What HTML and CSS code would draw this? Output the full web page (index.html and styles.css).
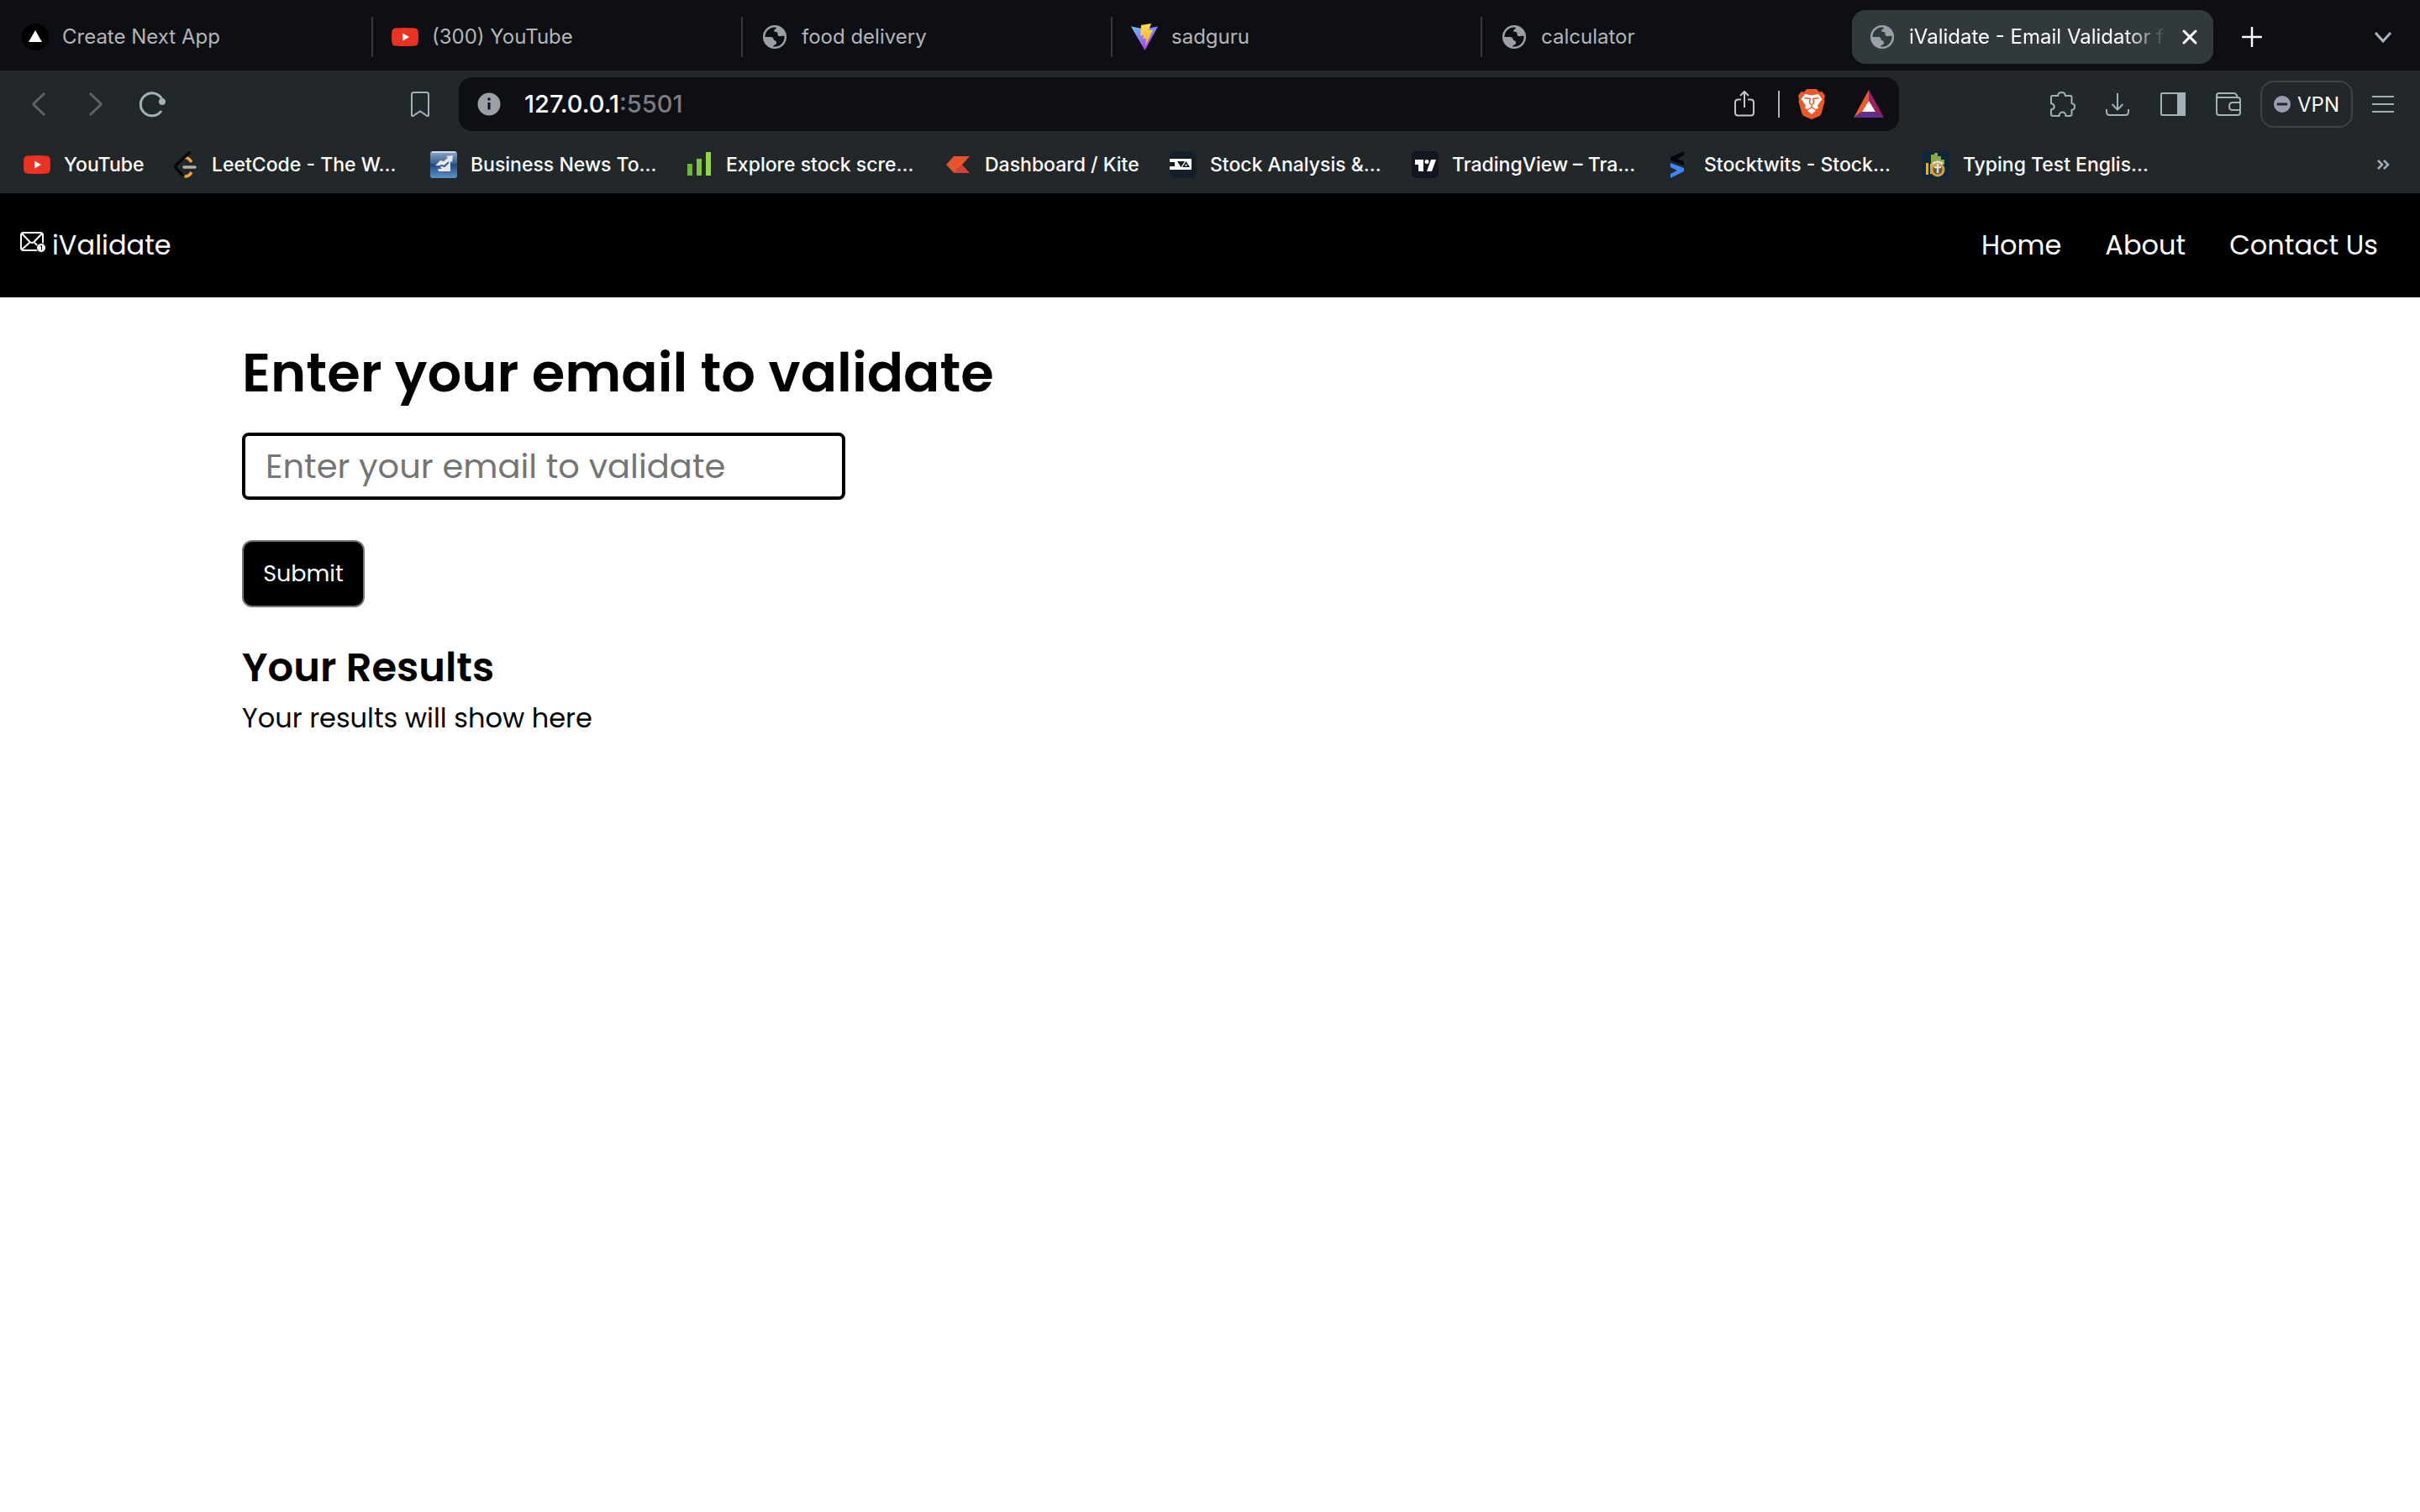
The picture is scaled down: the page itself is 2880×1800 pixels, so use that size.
FILE: index.html
```html
<!DOCTYPE html>
<html lang="en">
<head>
<meta charset="utf-8">
<title>iValidate - Email Validator</title>
<link rel="stylesheet" href="styles.css">
</head>
<body>
<svg class="sprite" aria-hidden="true">
  <symbol id="globe" viewBox="0 0 32 32"><circle cx="16" cy="16" r="12.800" fill="none" stroke="currentColor" stroke-width="2.500"/><path fill="currentColor" d="M18 3.500V7q0 2-2 2h-2.500v2q0 1.500-2 1.500H9V15h9q2 0 2 2h5q2 0 3.500-2.500C28 8 24 4 18 3.500z" opacity=".0"/><path fill="currentColor" d="M18 3C18.500 5 17.500 7 15.500 7.500c-1 2 .5 2.500 2.500 2.500 1.500 0 1.500 1.500 1.500 3 0 1.500 1.500 2.500 3.500 2 2-.500 4 0 5.500-.500C28 8.500 23.500 4 18 3zM3.500 16H11c2.500 0 3.500 1.500 4 4 2 0 3 1 3 3s-1 2-2.500 2.500c-1 .5-1.500 1.500-1.500 3C8 27.500 3.500 22 3.500 16z"/></symbol>
  <symbol id="youtube" viewBox="0 0 32 32"><path fill="#eb3223" d="M4 5.500Q16 4.500 28 5.500Q31 6 31.500 9Q32.500 16 31.500 23Q31 26 28 26.500Q16 27.500 4 26.500Q1 26 .5 23Q-.5 16 .5 9Q1 6 4 5.500z"/><path fill="#fff" d="M13 11.500v9.200l8-4.600z"/></symbol>
</svg>

<header class="browser">
  <div class="tabs">
    <div class="tab"><svg class="fav" viewBox="0 0 32 32"><circle cx="16" cy="16" r="16" fill="#000"/><path fill="#fff" d="M16 8l8 14H8z"/></svg><span>Create Next App</span></div>
    <div class="tab"><svg class="fav"><use href="#youtube"/></svg><span>(300) YouTube</span></div>
    <div class="tab"><svg class="fav"><use href="#globe"/></svg><span>food delivery</span></div>
    <div class="tab"><svg class="fav" viewBox="0 0 32 32"><defs><linearGradient id="va" x1="0" y1="0" x2=".6" y2="1"><stop offset="0" stop-color="#5cc8ff"/><stop offset="1" stop-color="#b432f5"/></linearGradient><linearGradient id="vb" x1="0" y1="0" x2="0" y2="1"><stop offset="0" stop-color="#ffe14d"/><stop offset="1" stop-color="#ffa52e"/></linearGradient></defs><path fill="url(#va)" d="M0 3.500l16 3 16-3L16.500 32z"/><path fill="url(#vb)" d="M12 2L24 0l-3 8 5-.5-9 20 1-10-3.500.8.500-4.300-4 .500z"/></svg><span>sadguru</span></div>
    <div class="tab last"><svg class="fav"><use href="#globe"/></svg><span>calculator</span></div>
    <div class="tab active"><svg class="fav"><use href="#globe"/></svg><span class="fade">iValidate - Email Validator f</span><button class="icon" aria-label="Close tab"><svg class="i24" viewBox="0 0 24 24"><path d="M5 5l14 14M19 5L5 19" stroke="#fff" stroke-width="3" stroke-linecap="round"/></svg></button></div>
    <button class="icon newtab" aria-label="New tab"><svg class="i24" viewBox="0 0 24 24"><path d="M12 1v22M1 12h22" stroke="#fff" stroke-width="2.500" stroke-linecap="round"/></svg></button>
    <button class="icon search" aria-label="Search tabs"><svg class="i24" viewBox="0 0 24 24"><path d="M3 7l9 10 9-10" fill="none" stroke="#aab4bc" stroke-width="3"/></svg></button>
  </div>

  <div class="toolbar">
    <div class="moves">
      <button class="icon dim" aria-label="Back"><svg class="i32" viewBox="0 0 32 32"><path d="M23 3L10.500 15q-1 1 0 2L23 29"/></svg></button>
      <button class="icon dim" aria-label="Forward"><svg class="i32" viewBox="0 0 32 32"><path d="M9 3l12.500 12q1 1 0 2L9 29"/></svg></button>
      <button class="icon" aria-label="Reload"><svg class="i32" viewBox="0 0 32 32"><path d="M26 24A13.500 13.500 0 1 1 26.500 9.500"/><circle cx="27" cy="13" r="4" fill="#a2b0ba" stroke="none"/></svg></button>
    </div>
    <button class="icon mark" aria-label="Bookmark this page"><svg class="i32" viewBox="0 0 32 32"><path d="M6 29V4.500q0-2.500 2.500-2.500h15q2.500 0 2.500 2.500V29q0 1.500-1.500 1L16 24.500 7.500 30Q6 30.500 6 29z"/></svg></button>
    <div class="address">
      <svg class="i32" viewBox="0 0 32 32"><circle cx="16" cy="16" r="13.500" fill="#9aa0a6" stroke="none"/><path d="M16 14v8.500" stroke="#0e0f14" stroke-width="3"/><circle cx="16" cy="10" r="1.800" fill="#0e0f14" stroke="none"/></svg>
      <span class="url">127.0.0.1<span class="port">:5501</span></span>
      <button class="icon share" aria-label="Share"><svg class="i32" viewBox="0 0 32 32"><path stroke="#c4c5c7" d="M12 10.500H8.500Q5 10.500 5 14v12q0 3.500 3.500 3.500h15Q27 29.500 27 26V14q0-3.500-3.500-3.500H20M16 20V1M11 6l5-5 5 5"/></svg></button>
      <span class="rule"></span>
      <button class="icon lion" aria-label="Shields"><svg class="i36" viewBox="0 0 36 36"><path fill="#eb5a28" d="M12 0h12l3 3.500 3.500-.500 3.500 5-1 4 .5 3-4 14.500q-1 2-3 3L18 36l-8.500-3.500q-2-1-3-3L2.500 15 3 12 2 8l3.500-5 3.500.500z"/><path fill="#fff" d="M10 6l8 1.500L26 6l4.500 6L25 19.500l1 3.500-3.500 1L18 20.500 13.500 24 10 23l1-3.500L5.500 12zM18 22.500l5 3-5 4.500-5-4.500z"/><path d="M9.500 10.500l6.500 1-.5 5 2.500 2.500 2.500-2.500-.5-5 6.500-1M18 18v3" fill="none" stroke="#eb5a28" stroke-width="1.500"/></svg></button>
      <button class="icon bat" aria-label="Rewards"><svg class="i36" viewBox="0 0 36 36"><path fill="#f1592a" d="M18 1v13l-8 13L0 34z"/><path fill="#9e1f63" d="M18 1l18 33-10-7-8-13z"/><path fill="#662d91" d="M0 34h36l-10-7H10z"/><path fill="#fff" d="M18 14l8 13H10z"/></svg></button>
    </div>
    <div class="tools">
      <button class="icon" aria-label="Extensions"><svg class="i32" viewBox="0 0 32 32"><path d="M4 6h7C11.500 .5 19.500 .5 20 6h6q1.500 0 1.500 1.500V15c5 1 5 7 0 8v5q0 2-2 2h-5c0-6-8-6-8 0H5q-2 0-2-2v-5.500c5-1 5-6 0-7.500V7.500Q3 6 4 6z"/></svg></button>
      <button class="icon" aria-label="Downloads"><svg class="i32" viewBox="0 0 32 32"><path d="M16 3v19M9.500 16l6.500 6.500 6.500-6.500M3 22v3q0 4 4 4h18q4 0 4-4v-3"/></svg></button>
      <button class="icon" aria-label="Sidebar"><svg class="i32" viewBox="0 0 32 32"><rect x="2" y="3" width="28" height="26" rx="1"/><path fill="#a2b0ba" d="M22 3h8v26h-8z"/></svg></button>
      <button class="icon" aria-label="Wallet"><svg class="i32" viewBox="0 0 32 32"><path d="M2 6v20q0 3 3 3h22q3 0 3-3V11q0-3-3-3H4.500Q2 8 2 5.500T4.500 3H22q4 0 4.500 5M30 14h-9q-4 0-4 4.500t4 4.500h9"/></svg></button>
      <button class="vpn"><svg class="i20" viewBox="0 0 20 20"><circle cx="10" cy="10" r="10" fill="#9a9db1"/><path d="M5 10h10" stroke="#22272b" stroke-width="3" stroke-linecap="round"/></svg>VPN</button>
      <button class="icon" aria-label="Menu"><svg class="i32" viewBox="0 0 32 32"><path d="M3 7h26M3 16h26M3 25h26"/></svg></button>
    </div>
  </div>

  <nav class="bookmarks" aria-label="Bookmarks">
    <a class="w176" href="#"><svg class="fav"><use href="#youtube"/></svg><span>YouTube</span></a>
    <a class="w308" href="#"><svg class="fav" viewBox="0 0 32 32"><path d="M15 8q4-2 9 5M13 28q6 5 11-3" fill="none" stroke="#f0a33a" stroke-width="3.500"/><path d="M21 2L6 16q-2 2.500 0 5l8 8" fill="none" stroke="#070706" stroke-width="3.500" stroke-linecap="round"/><path d="M15 19h13" stroke="#b3b1b0" stroke-width="3.500" stroke-linecap="round"/></svg><span>LeetCode - The W…</span></a>
    <a class="w304" href="#"><svg class="fav" viewBox="0 0 32 32"><defs><linearGradient id="bn" x1="0" y1="0" x2="0" y2="1"><stop offset="0" stop-color="#93a9c9"/><stop offset=".45" stop-color="#3a6093"/><stop offset=".5" stop-color="#1f4a80"/><stop offset="1" stop-color="#5f94c8"/></linearGradient></defs><rect width="32" height="32" rx="3" fill="url(#bn)"/><path d="M2 1h28" stroke="#c8dcea" stroke-width="2"/><path fill="#e8e8ec" d="M6 17l6-6 4 1 5-4-2-2 8-1-1 8-2-1v12H10l-1-3h5l-4-4z"/><path d="M7 19l7-2 3 1 5-5" fill="none" stroke="#3a5f92" stroke-width="2"/></svg><span>Business News To…</span></a>
    <a class="w308" href="#"><svg class="fav" viewBox="0 0 32 32"><path fill="#6fb536" d="M2 15h6v14H2z"/><path fill="#7dc63d" d="M13 9h6v20h-6z"/><path fill="#8fd840" d="M24 1h6v28h-6z"/></svg><span>Explore stock scre…</span></a>
    <a class="w268" href="#"><svg class="fav" viewBox="0 0 32 32"><path fill="#e6532e" d="M11 6h19l-9 10-9 9.500h-1L2 16z"/><path fill="#cf4436" d="M21 16l9 10H11z"/></svg><span>Dashboard / Kite</span></a>
    <a class="w288" href="#"><svg class="fav" viewBox="0 0 32 32"><rect width="32" height="32" rx="6" fill="#151d28"/><path fill="#fff" d="M0 9h25q1 0 1 1v11q0 1-1 1H0v-4h6v-3H0z"/><path fill="#151d28" d="M0 13h6v2H0zM9 12h9l-4.500 7z"/><path fill="#151d28" fill-rule="evenodd" d="M19.500 12l4.500 7h-9zM19.500 15l-1.500 2.500h3z"/></svg><span>Stock Analysis &amp;…</span></a>
    <a class="w300" href="#"><svg class="fav" viewBox="0 0 32 32"><rect width="32" height="32" rx="5" fill="#131520"/><path fill="#fff" d="M4 10h10v14H8v-8H4zM23 10h6l-5 14h-6z"/><circle cx="18" cy="12.500" r="2.500" fill="#fff"/></svg><span>TradingView – Tra…</span></a>
    <a class="w308" href="#"><svg class="fav" viewBox="0 0 32 32"><path fill="#060710" d="M24 0v5l-8 4 8 3v5L8 11V7z"/><path fill="#3f87f5" d="M8 14l16 6v4L8 32v-5l8-4-8-4z"/></svg><span>Stocktwits - Stock…</span></a>
    <a href="#"><svg class="fav" viewBox="0 0 32 32"><rect width="32" height="32" fill="#10263a"/><path fill="#87a842" d="M10 14V4h4V2h4v4h4v4h4v6H10z"/><path fill="#e0ac34" d="M4 14h3v14H4zM9 15h3v12H9z"/><circle cx="18" cy="22" r="7" fill="#5d5a3c" stroke="#d4a235" stroke-width="3"/><path d="M12 15q6-5 12 0M18 15v11M14 19h8" fill="none" stroke="#dedede" stroke-width="2.500"/></svg><span>Typing Test Englis…</span></a>
    <button class="icon more" aria-label="More bookmarks"><svg class="i24" viewBox="0 0 24 24"><path d="M6 7l5 5-5 5M13 7l5 5-5 5" fill="none" stroke="#a2b0ba" stroke-width="2.500"/></svg></button>
  </nav>
</header>

<nav class="site">
  <a class="logo" href="#"><svg class="mail" viewBox="0 0 32 32"><rect x="1" y="1" width="26" height="21" rx="3"/><path d="M2 2l9.500 10q2.500 2 5 0L26 2M2 21l9-8M26 21l-9-8"/><circle cx="25" cy="19" r="5.500" fill="#fff" stroke="#000" stroke-width="1"/><path d="M24 17.500l1.500-1v5" stroke="#000" stroke-width="1"/></svg>iValidate</a>
  <div class="links"><a href="#">Home</a><a href="#">About</a><a href="#">Contact Us</a></div>
</nav>

<main>
  <h1><label for="email">Enter your email to validate</label></h1>
  <form>
    <input id="email" type="text" placeholder="Enter your email to validate">
    <button class="submit" type="button">Submit</button>
  </form>
  <h2>Your Results</h2>
  <p>Your results will show here</p>
</main>
</body>
</html>
```
FILE: styles.css
```css
* { box-sizing: border-box; }
body { margin: 0; background: #fff; color: #000; font-family: Poppins, Inter, sans-serif; }
a { color: inherit; text-decoration: none; }
button { font-family: inherit; }
svg { display: block; flex: none; }
.sprite { position: absolute; width: 0; height: 0; }
.fav { width: 32px; height: 32px; color: #9aa0a6; }
.i20 { width: 20px; height: 20px; }
.i24 { width: 24px; height: 24px; }
.i32 { width: 32px; height: 32px; fill: none; stroke: #a2b0ba; stroke-width: 2; }
.i36 { width: 36px; height: 36px; }
.icon { display: block; flex: none; padding: 0; border: 0; background: none; }

.browser { background: #22272a; font-family: Inter, sans-serif; font-size: 24px; line-height: 32px; white-space: nowrap; }
.tabs { display: flex; align-items: center; height: 84px; padding: 4px 22px 0 4px; background: #0e0f14; color: #b4b5b7; }
.tab { display: flex; align-items: center; flex: 0 1 440px; gap: 16px; height: 48px; padding: 0 22px; border-right: 2px solid #37383c; min-width: 0; }
.tab.last { border-color: transparent; }
.tab.active { flex-basis: 430px; height: 64px; padding: 0 16px 0 20px; border: 0; border-radius: 16px; background: #32393d; color: #fff; }
.fade { flex: 1; mask-image: linear-gradient(to right, #000 84%, transparent); }
.newtab { margin-left: 34px; }
.search { margin-left: auto; margin-right: 10px; }

.toolbar { display: flex; align-items: center; height: 80px; padding: 0 28px 0 30px; }
.moves { display: flex; gap: 36px; width: 454px; }
.dim .i32 { stroke: #5b646b; }
.moves .i32 { stroke-width: 3; }
.mark { margin-right: 30px; }
.address { display: flex; align-items: center; flex: 1; height: 64px; padding: 0 18px 0 20px; border-radius: 16px; background: #0e0f14; color: #fff; }
.url { margin-left: 26px; font-size: 29px; font-weight: 500; }
.port { color: #7c7d81; }
.share { margin-left: auto; }
.rule { width: 2px; height: 32px; margin: 0 20px 0 24px; background: #b0b1b3; }
.bat { margin-left: 32px; }
.tools { display: flex; align-items: center; gap: 34px; margin-left: 178px; }
.vpn { display: flex; align-items: center; gap: 8px; width: 110px; height: 56px; margin: 0 -14px 0 -12px; padding: 0 14px; border: 2px solid #3b444a; border-radius: 16px; background: none; color: #fff; font-size: 24px; }

.bookmarks { display: flex; align-items: center; height: 66px; padding: 0 32px 2px 28px; color: #fff; font-size: 23px; font-weight: 500; }
.bookmarks a { display: flex; align-items: center; flex: 0 1 auto; gap: 16px; min-width: 0; }
.w176 { width: 176px; }
.w268 { width: 268px; }
.w288 { width: 288px; }
.w300 { width: 300px; }
.w304 { width: 304px; }
.w308 { width: 308px; }
.more { margin-left: auto; }

.site { display: flex; align-items: center; justify-content: space-between; height: 124px; padding: 0 50px 0 24px; background: #000; color: #fff; font-size: 32px; }
.logo { display: flex; align-items: center; gap: 6px; }
.mail { width: 32px; height: 32px; fill: none; stroke: #fff; stroke-width: 2; }
.links { display: flex; gap: 52px; }

main { padding: 49px 10%; }
h1 { margin: 0; font-size: 64px; line-height: 82px; font-weight: 600; }
form { display: flex; flex-direction: column; align-items: flex-start; gap: 48px; margin: 30px 0 48px; }
input { width: 718px; max-width: 100%; height: 80px; padding: 0 24px; border: 4px solid #000; border-radius: 8px; font-family: inherit; font-size: 40px; }
input::placeholder { color: #757575; }
.submit { width: 146px; height: 80px; padding: 0; border: 2px solid #767676; border-radius: 12px; background: #000; color: #fff; font-size: 27px; }
h2 { margin: 0; font-size: 48px; line-height: 48px; font-weight: 600; }
p { margin: 12px 0 0; font-size: 32px; line-height: 48px; }
```
